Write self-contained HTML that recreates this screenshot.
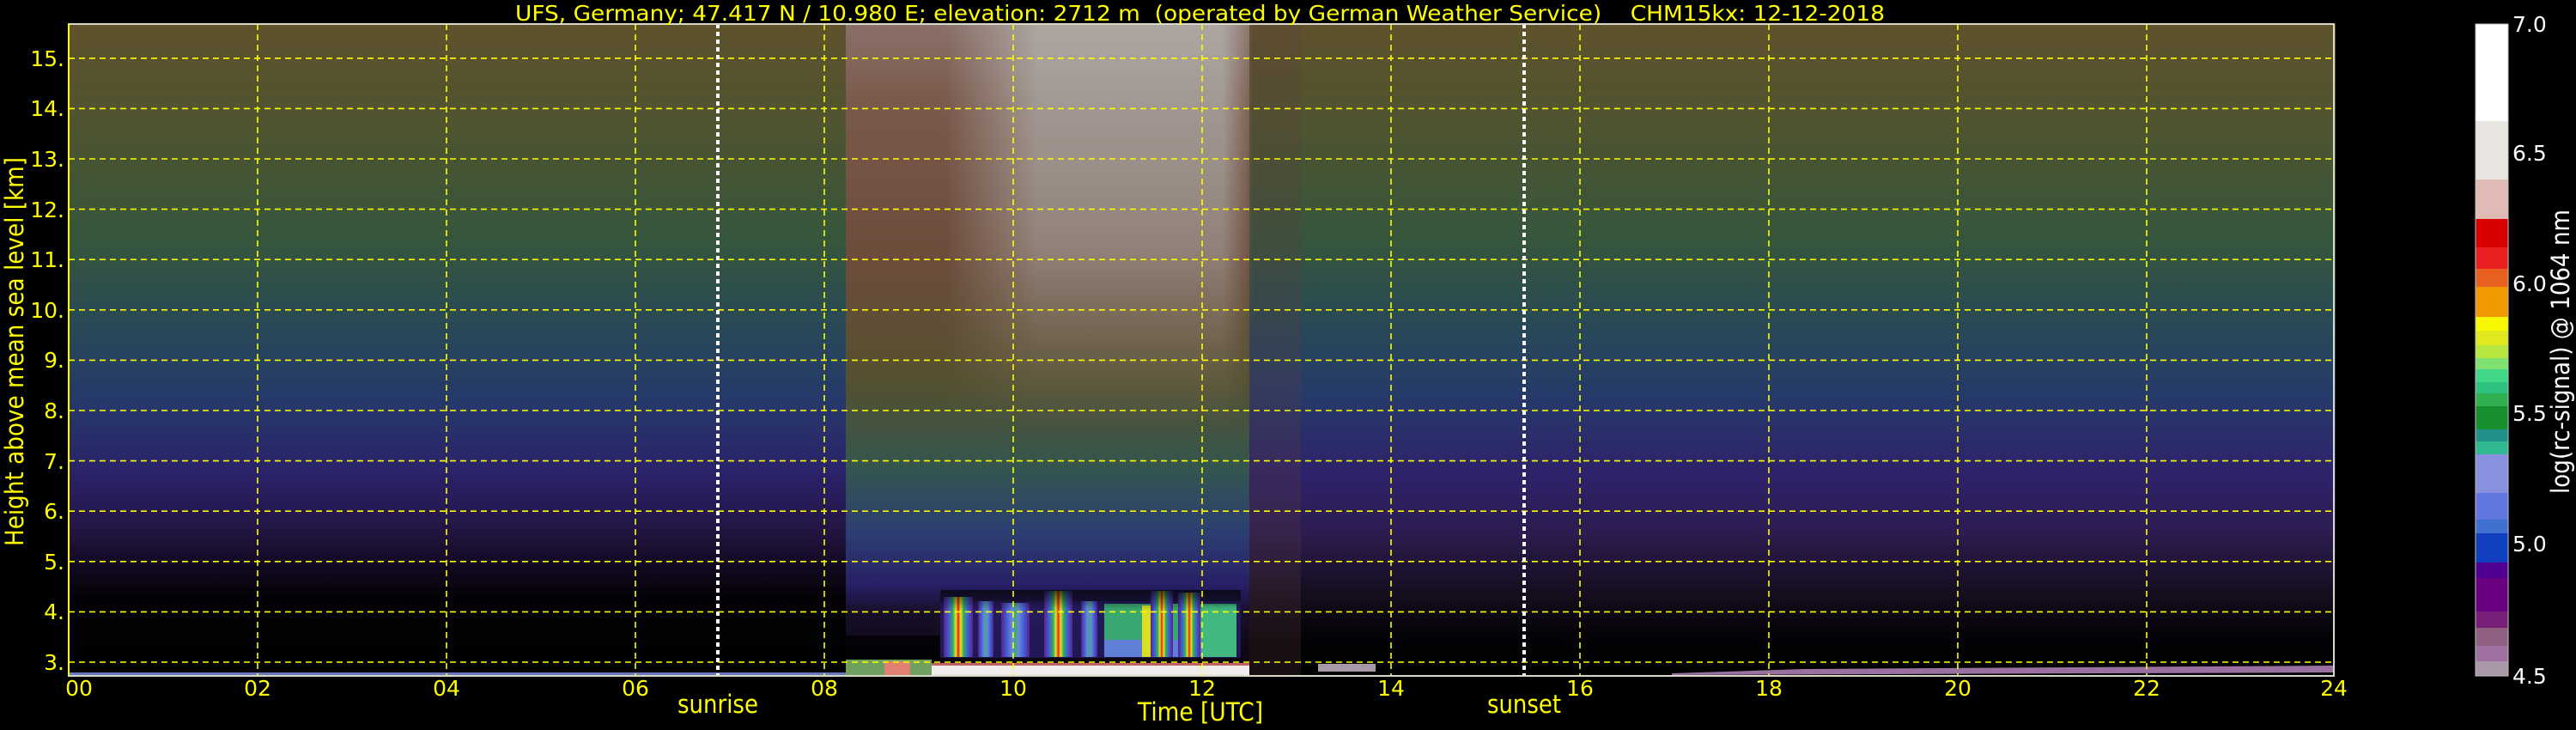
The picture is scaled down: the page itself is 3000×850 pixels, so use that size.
<!DOCTYPE html>
<html><head><meta charset="utf-8"><style>
html,body{margin:0;padding:0;background:#000;width:3000px;height:850px;overflow:hidden}
svg{display:block}
text{font-family:"DejaVu Sans","Liberation Sans",sans-serif}
</style></head><body>
<svg width="3000" height="850" viewBox="0 0 3000 850" xmlns="http://www.w3.org/2000/svg">
<defs>
<linearGradient id="gL" gradientUnits="userSpaceOnUse" x1="0" y1="28" x2="0" y2="787">
<stop offset="0" stop-color="#5e522c"/>
<stop offset="0.16" stop-color="#4e5430"/>
<stop offset="0.33" stop-color="#36563c"/>
<stop offset="0.47" stop-color="#284858"/>
<stop offset="0.57" stop-color="#263a6a"/>
<stop offset="0.69" stop-color="#2a226a"/>
<stop offset="0.77" stop-color="#241646"/>
<stop offset="0.84" stop-color="#10081c"/>
<stop offset="0.88" stop-color="#040206"/>
<stop offset="1" stop-color="#000"/>
</linearGradient>
<linearGradient id="gR" gradientUnits="userSpaceOnUse" x1="0" y1="28" x2="0" y2="787">
<stop offset="0" stop-color="#5e522c"/>
<stop offset="0.16" stop-color="#4e5430"/>
<stop offset="0.33" stop-color="#36563c"/>
<stop offset="0.47" stop-color="#284858"/>
<stop offset="0.57" stop-color="#263a6a"/>
<stop offset="0.69" stop-color="#2e226a"/>
<stop offset="0.78" stop-color="#2c1c50"/>
<stop offset="0.87" stop-color="#160e20"/>
<stop offset="0.94" stop-color="#040206"/>
<stop offset="1" stop-color="#000"/>
</linearGradient>
<linearGradient id="gM" gradientUnits="userSpaceOnUse" x1="0" y1="28" x2="0" y2="787">
<stop offset="0" stop-color="#8a7068"/>
<stop offset="0.12" stop-color="#7a5a4c"/>
<stop offset="0.35" stop-color="#6e4c3c"/>
<stop offset="0.55" stop-color="#545030"/>
<stop offset="0.68" stop-color="#34564e"/>
<stop offset="0.78" stop-color="#2c3e72"/>
<stop offset="0.86" stop-color="#282066"/>
<stop offset="0.9" stop-color="#18102c"/>
<stop offset="1" stop-color="#080408"/>
</linearGradient>
<linearGradient id="gW" gradientUnits="userSpaceOnUse" x1="0" y1="28" x2="0" y2="500">
<stop offset="0" stop-color="#b0aca8" stop-opacity="0.9"/>
<stop offset="0.55" stop-color="#a09a94" stop-opacity="0.7"/>
<stop offset="1" stop-color="#908078" stop-opacity="0"/>
</linearGradient>
<linearGradient id="gWh" x1="0" y1="0" x2="1" y2="0">
<stop offset="0" stop-color="#000"/>
<stop offset="0.3" stop-color="#fff"/>
<stop offset="0.9" stop-color="#fff"/>
<stop offset="1" stop-color="#000"/>
</linearGradient>
<mask id="mW"><rect x="1100" y="28" width="360" height="480" fill="url(#gWh)"/></mask>
<linearGradient id="gT" x1="0" y1="0" x2="1" y2="0">
<stop offset="0" stop-color="#000" stop-opacity="0"/>
<stop offset="1" stop-color="#000" stop-opacity="0.35"/>
</linearGradient>
<linearGradient id="cBlue" x1="0" y1="0" x2="1" y2="0">
<stop offset="0" stop-color="#5a2090"/>
<stop offset="0.2" stop-color="#4060d0"/>
<stop offset="0.4" stop-color="#7088e0"/>
<stop offset="0.5" stop-color="#30b070"/>
<stop offset="0.6" stop-color="#7088e0"/>
<stop offset="0.8" stop-color="#4060d0"/>
<stop offset="1" stop-color="#5a2090"/>
</linearGradient>
<linearGradient id="cRed" x1="0" y1="0" x2="1" y2="0">
<stop offset="0" stop-color="#5a2090"/>
<stop offset="0.18" stop-color="#4060d0"/>
<stop offset="0.32" stop-color="#30b060"/>
<stop offset="0.42" stop-color="#f0e020"/>
<stop offset="0.5" stop-color="#e02010"/>
<stop offset="0.58" stop-color="#f0e020"/>
<stop offset="0.68" stop-color="#30b060"/>
<stop offset="0.82" stop-color="#4060d0"/>
<stop offset="1" stop-color="#5a2090"/>
</linearGradient>
<linearGradient id="cV" x1="0" y1="0" x2="0" y2="1">
<stop offset="0" stop-color="#000" stop-opacity="0.7"/>
<stop offset="0.3" stop-color="#000" stop-opacity="0"/>
<stop offset="1" stop-color="#000" stop-opacity="0"/>
</linearGradient>
</defs>

<rect width="3000" height="850" fill="#000"/>

<!-- data regions -->
<rect x="80" y="28" width="905" height="759" fill="url(#gL)"/>
<rect x="1455" y="28" width="1265" height="759" fill="url(#gR)"/>
<rect x="985" y="28" width="470" height="759" fill="url(#gM)"/>
<rect x="1100" y="28" width="360" height="480" fill="url(#gW)" mask="url(#mW)"/>
<rect x="1455" y="28" width="60" height="759" fill="#5a3a40" opacity="0.25"/>

<!-- cloud -->
<rect x="1095" y="700" width="350" height="66" fill="#2a2070" opacity="0.7"/>
<rect x="1099" y="695" width="34" height="70" fill="url(#cRed)"/>
<rect x="1139" y="700" width="18" height="65" fill="url(#cBlue)"/>
<rect x="1166" y="702" width="33" height="63" fill="url(#cBlue)"/>
<rect x="1216" y="688" width="33" height="77" fill="url(#cRed)"/>
<rect x="1259" y="700" width="19" height="65" fill="url(#cBlue)"/>
<rect x="1286" y="703" width="154" height="62" fill="#38a870"/>
<rect x="1286" y="745" width="154" height="20" fill="#6080d8"/>
<rect x="1330" y="705" width="18" height="60" fill="#d8e020"/>
<rect x="1340" y="688" width="26" height="77" fill="url(#cRed)"/>
<rect x="1372" y="690" width="26" height="75" fill="url(#cRed)"/>
<rect x="1400" y="705" width="40" height="60" fill="#40b880"/>
<rect x="1095" y="687" width="350" height="79" fill="url(#cV)"/>
<rect x="985" y="740" width="110" height="28" fill="#000" opacity="0.7"/>

<!-- bottom features -->
<rect x="985" y="768" width="100" height="19" fill="#70a060"/>
<rect x="1030" y="770" width="30" height="17" fill="#e08070"/>
<rect x="1085" y="775" width="370" height="12" fill="#f0ecec"/>
<rect x="1085" y="772" width="370" height="3" fill="#c06060"/>
<rect x="1535" y="773" width="67" height="9" fill="#a898a8"/>
<polygon points="1947,784 2100,779 2718,775 2718,783 1947,786" fill="#9a70a0"/>
<rect x="80" y="783" width="905" height="4" fill="#6a78c0"/>

<!-- grid -->
<g stroke="#ffff00" stroke-width="1.6" stroke-dasharray="7,5">
<line x1="80" y1="771" x2="2718" y2="771"/>
<line x1="80" y1="712.4" x2="2718" y2="712.4"/>
<line x1="80" y1="653.8" x2="2718" y2="653.8"/>
<line x1="80" y1="595.2" x2="2718" y2="595.2"/>
<line x1="80" y1="536.6" x2="2718" y2="536.6"/>
<line x1="80" y1="478" x2="2718" y2="478"/>
<line x1="80" y1="419.4" x2="2718" y2="419.4"/>
<line x1="80" y1="360.8" x2="2718" y2="360.8"/>
<line x1="80" y1="302.2" x2="2718" y2="302.2"/>
<line x1="80" y1="243.6" x2="2718" y2="243.6"/>
<line x1="80" y1="185" x2="2718" y2="185"/>
<line x1="80" y1="126.4" x2="2718" y2="126.4"/>
<line x1="80" y1="67.8" x2="2718" y2="67.8"/>
<line x1="300" y1="28" x2="300" y2="787"/>
<line x1="520" y1="28" x2="520" y2="787"/>
<line x1="740" y1="28" x2="740" y2="787"/>
<line x1="960" y1="28" x2="960" y2="787"/>
<line x1="1180" y1="28" x2="1180" y2="787"/>
<line x1="1400" y1="28" x2="1400" y2="787"/>
<line x1="1620" y1="28" x2="1620" y2="787"/>
<line x1="1840" y1="28" x2="1840" y2="787"/>
<line x1="2060" y1="28" x2="2060" y2="787"/>
<line x1="2280" y1="28" x2="2280" y2="787"/>
<line x1="2500" y1="28" x2="2500" y2="787"/>
</g>
<g stroke="#ffffff" stroke-width="4" stroke-dasharray="5,4">
<line x1="836" y1="28" x2="836" y2="787"/>
<line x1="1775" y1="28" x2="1775" y2="787"/>
</g>

<rect x="80" y="28" width="2638" height="759" fill="none" stroke="#d8d8c8" stroke-width="2"/>
<line x1="80" y1="28" x2="80" y2="787" stroke="#ffff00" stroke-width="2"/>

<text x="600" y="24" font-size="25" fill="#ffff00" textLength="1595" lengthAdjust="spacingAndGlyphs" xml:space="preserve">UFS, Germany; 47.417 N / 10.980 E; elevation: 2712 m  (operated by German Weather Service)    CHM15kx: 12-12-2018</text>

<g font-size="25" fill="#ffff00" text-anchor="end">
<text x="75" y="780">3.</text>
<text x="75" y="721">4.</text>
<text x="75" y="663">5.</text>
<text x="75" y="604">6.</text>
<text x="75" y="546">7.</text>
<text x="75" y="487">8.</text>
<text x="75" y="428">9.</text>
<text x="75" y="370">10.</text>
<text x="75" y="311">11.</text>
<text x="75" y="253">12.</text>
<text x="75" y="194">13.</text>
<text x="75" y="135">14.</text>
<text x="75" y="77">15.</text>
</g>
<text transform="translate(27,636) rotate(-90)" font-size="29" fill="#ffff00" textLength="453" lengthAdjust="spacingAndGlyphs">Height above mean sea level [km]</text>

<g font-size="25" fill="#ffff00" text-anchor="middle">
<text x="92" y="810">00</text>
<text x="300" y="810">02</text>
<text x="520" y="810">04</text>
<text x="740" y="810">06</text>
<text x="960" y="810">08</text>
<text x="1180" y="810">10</text>
<text x="1400" y="810">12</text>
<text x="1620" y="810">14</text>
<text x="1840" y="810">16</text>
<text x="2060" y="810">18</text>
<text x="2280" y="810">20</text>
<text x="2500" y="810">22</text>
<text x="2718" y="810">24</text>
</g>
<g font-size="29" fill="#ffff00">
<text x="789" y="830" textLength="94" lengthAdjust="spacingAndGlyphs">sunrise</text>
<text x="1732" y="830" textLength="86" lengthAdjust="spacingAndGlyphs">sunset</text>
<text x="1325" y="839" textLength="146" lengthAdjust="spacingAndGlyphs">Time [UTC]</text>
</g>

<g>
<rect x="2883" y="28" width="38" height="113" fill="#ffffff"/>
<rect x="2883" y="141" width="38" height="68" fill="#e8e5e0"/>
<rect x="2883" y="209" width="38" height="46" fill="#e0bab5"/>
<rect x="2883" y="255" width="38" height="33" fill="#d80000"/>
<rect x="2883" y="288" width="38" height="25" fill="#e82020"/>
<rect x="2883" y="313" width="38" height="21" fill="#e86020"/>
<rect x="2883" y="334" width="38" height="35" fill="#f09800"/>
<rect x="2883" y="369" width="38" height="16" fill="#f8f800"/>
<rect x="2883" y="385" width="38" height="17" fill="#e0e820"/>
<rect x="2883" y="402" width="38" height="15" fill="#b8e840"/>
<rect x="2883" y="417" width="38" height="13" fill="#80e070"/>
<rect x="2883" y="430" width="38" height="15" fill="#40d888"/>
<rect x="2883" y="445" width="38" height="13" fill="#30c080"/>
<rect x="2883" y="458" width="38" height="15" fill="#30b050"/>
<rect x="2883" y="473" width="38" height="27" fill="#189030"/>
<rect x="2883" y="500" width="38" height="14" fill="#209088"/>
<rect x="2883" y="514" width="38" height="15" fill="#30b890"/>
<rect x="2883" y="529" width="38" height="45" fill="#8890e0"/>
<rect x="2883" y="574" width="38" height="31" fill="#6078e0"/>
<rect x="2883" y="605" width="38" height="16" fill="#4070d0"/>
<rect x="2883" y="621" width="38" height="34" fill="#1040c0"/>
<rect x="2883" y="655" width="38" height="18" fill="#500090"/>
<rect x="2883" y="673" width="38" height="39" fill="#680080"/>
<rect x="2883" y="712" width="38" height="19" fill="#782078"/>
<rect x="2883" y="731" width="38" height="21" fill="#906080"/>
<rect x="2883" y="752" width="38" height="18" fill="#a070a0"/>
<rect x="2883" y="770" width="38" height="17" fill="#a898a8"/>
<rect x="2883" y="28" width="38" height="759" fill="none" stroke="#c0c0c0" stroke-width="1"/>
</g>
<g font-size="25" fill="#ffffff">
<text x="2926" y="37">7.0</text>
<text x="2926" y="187">6.5</text>
<text x="2926" y="339">6.0</text>
<text x="2926" y="490">5.5</text>
<text x="2926" y="642">5.0</text>
<text x="2926" y="796">4.5</text>
</g>
<text transform="translate(2992,575) rotate(-90)" font-size="29" fill="#ffffff" textLength="331" lengthAdjust="spacingAndGlyphs">log(rc-signal) @ 1064 nm</text>
</svg>
</body></html>
